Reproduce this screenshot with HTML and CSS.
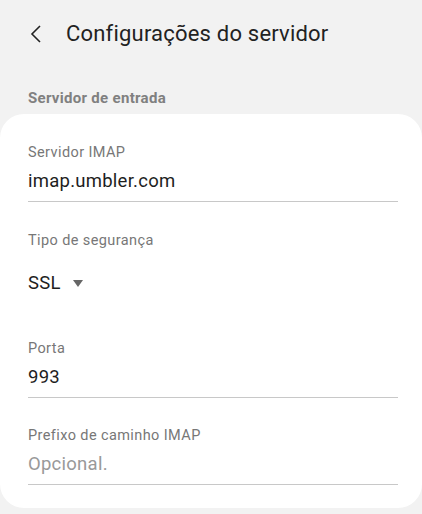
FILE: index.html
```html
<!DOCTYPE html>
<html lang="pt-BR">
<head>
  <meta charset="UTF-8">
  <title>Configurações do servidor</title>
  <meta name="viewport" content="width=device-width, initial-scale=1.0">
  <link rel="stylesheet" href="styles.css">
</head>
<body>
  <header class="top-bar">
    <svg class="back-icon" width="12" height="18" viewBox="0 0 12 18">
      <polyline points="10,1 2,9 10,17" fill="none" stroke="#222" stroke-width="1.6"/>
    </svg>
    <h1>Configurações do servidor</h1>
  </header>

  <div class="section-title">Servidor de entrada</div>

  <div class="card">
    <div class="field">
      <div class="field-label">Servidor IMAP</div>
      <div class="field-value">imap.umbler.com</div>
    </div>

    <div class="field spinner">
      <div class="field-label">Tipo de segurança</div>
      <div class="field-value">SSL <span class="arrow"></span></div>
    </div>

    <div class="field">
      <div class="field-label">Porta</div>
      <div class="field-value">993</div>
    </div>

    <div class="field">
      <div class="field-label">Prefixo de caminho IMAP</div>
      <div class="field-value placeholder">Opcional.</div>
    </div>
  </div>
</body>
</html>
```

FILE: styles.css
```css
body {
  margin: 0; padding: 0;
  font-family: Roboto, "Liberation Sans", sans-serif;
  background-color: #f2f2f2;
  color: #222;
}

.top-bar {
  display: flex;
  align-items: center;
  padding: 20px 0 0 30px;
  height: 28px;
}
.back-icon {
  margin-right: 24px;
}
.top-bar h1 {
  margin: 0;
  font-size: 22px;
  font-weight: 400;
  line-height: 28px;
  letter-spacing: 0.2px;
  color: #222;
}

.section-title {
  margin: 40px 0 6px 28px;
  font-size: 15px;
  font-weight: 700;
  line-height: 20px;
  letter-spacing: 0.3px;
  color: #808080;
}

.card {
  background-color: #fff;
  border-radius: 24px;
  padding: 0 24px 23px 28px;
}

.field {
  padding: 29px 0 7px;
  border-bottom: 1px solid #c8c8c8;
}
.field:last-child {
  padding-top: 28px;
}
.field-label {
  font-size: 14.5px;
  line-height: 20px;
  letter-spacing: 0.4px;
  color: #777;
}
.field-value {
  margin-top: 5px;
  font-size: 18.5px;
  line-height: 26px;
  letter-spacing: 0.25px;
  color: #1e1e1e;
}
.field-value.placeholder {
  color: #999;
}

.spinner {
  border-bottom: none;
  padding-bottom: 14px;
}
.spinner .field-value {
  margin-top: 19px;
  display: flex;
  align-items: center;
}
.arrow {
  display: inline-block;
  margin-left: 12px;
  width: 0; height: 0;
  border-left: 5px solid transparent;
  border-right: 5px solid transparent;
  border-top: 7px solid #666;
}
```
